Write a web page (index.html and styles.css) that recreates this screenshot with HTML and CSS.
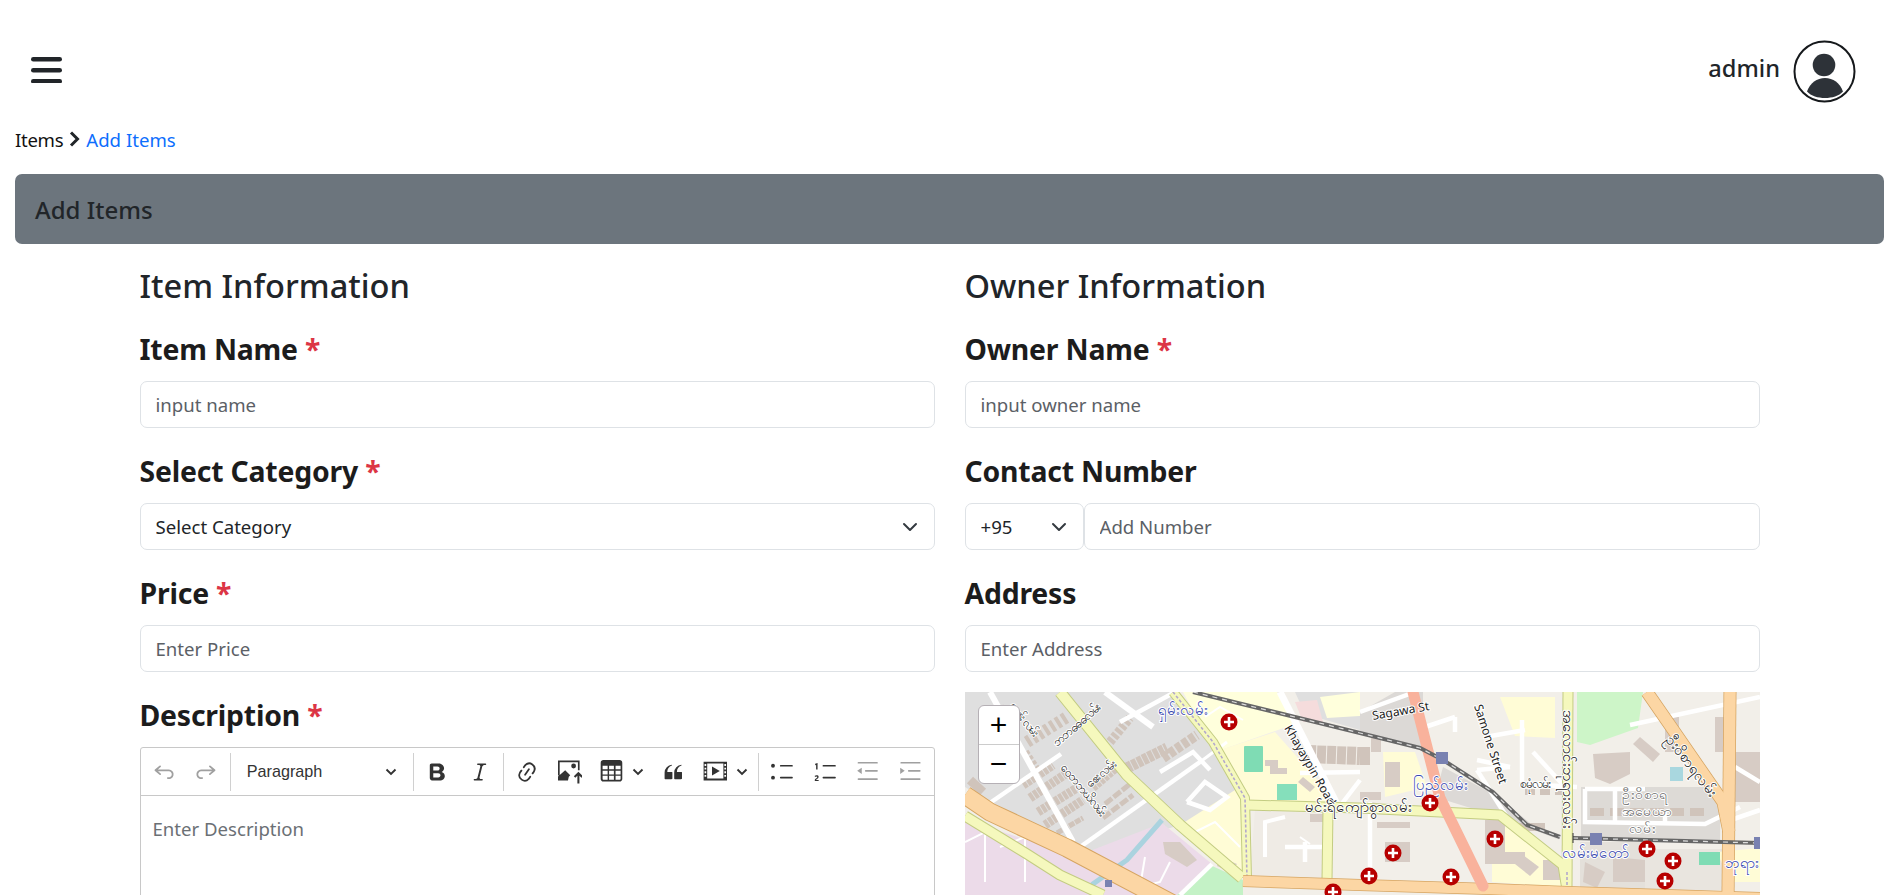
FILE: index.html
```html
<!DOCTYPE html>
<html>
<head>
  <meta charset="UTF-8" />
  <title>Add Items</title>
  <link rel="stylesheet" href="styles.css">
</head>
<body>
  <header class="topbar">
    <svg class="burger" width="31" height="26" viewBox="0 0 31 26"><rect y="0" width="31" height="4.6" rx="2.3"/><rect y="11" width="31" height="4.6" rx="2.3"/><rect y="22" width="31" height="4.6" rx="2.3"/></svg>
    <div class="user">
      <span class="user-name">admin</span>
      <svg class="avatar" width="63" height="63" viewBox="0 0 63 63">
        <circle cx="31.5" cy="31.5" r="30" fill="#fff" stroke="#16191c" stroke-width="2"/>
        <circle cx="31" cy="25" r="11.3" fill="#2d3238"/>
        <path d="M14 51.5C17 43 24 38 32 38S47 43 50 51.5C46 56 39 58 32 58S18 56 14 51.5Z" fill="#2d3238"/>
      </svg>
    </div>
  </header>

  <nav class="crumbs">
    <span class="crumb-first">Items</span>
    <svg class="crumb-sep" width="11" height="16" viewBox="0 0 11 16"><path d="M2 1.5 8.500 8 2 14.500" fill="none" stroke="#212529" stroke-width="3"/></svg>
    <a class="crumb-link">Add Items</a>
  </nav>

  <div class="banner">Add Items</div>

  <form class="form-row">
    <section class="col">
      <h3 class="col-title">Item Information</h3>
      <div class="group">
        <h4 class="label">Item Name <span class="star">*</span></h4>
        <input class="field" type="text" placeholder="input name" />
      </div>
      <div class="group">
        <h4 class="label">Select Category <span class="star">*</span></h4>
        <div class="select-wrap">
          <select class="field select"><option>Select Category</option></select>
          <svg class="chev" width="16" height="10" viewBox="0 0 16 10"><path d="M2 2l6 6 6-6" fill="none" stroke="#343a40" stroke-width="2" stroke-linecap="round" stroke-linejoin="round"/></svg>
        </div>
      </div>
      <div class="group">
        <h4 class="label">Price <span class="star">*</span></h4>
        <input class="field" type="text" placeholder="Enter Price" />
      </div>
      <div class="group">
        <h4 class="label">Description <span class="star">*</span></h4>
        <div class="editor">
          <div class="toolbar">
            <button type="button" class="tool off"><svg viewBox="0 0 20 20"><path d="m5.042 9.367 2.189 1.837a.75.75 0 0 1-.965 1.149l-3.788-3.18a.747.747 0 0 1-.21-.284.75.75 0 0 1 .17-.945L6.23 4.762a.75.75 0 1 1 .964 1.15L4.863 7.867h8.917A.75.75 0 0 1 14 7.9a4 4 0 1 1-1.477 7.718l.344-1.489a2.5 2.5 0 1 0 1.094-4.73l.008-.032H5.042z"/></svg></button>
            <button type="button" class="tool off"><svg viewBox="0 0 20 20"><path d="m14.958 9.367-2.189 1.837a.75.75 0 0 0 .965 1.149l3.788-3.18a.747.747 0 0 0 .21-.284.75.75 0 0 0-.17-.945L13.77 4.762a.75.75 0 1 0-.964 1.15l2.331 1.955H6.22A.75.75 0 0 0 6 7.9a4 4 0 1 0 1.477 7.718l-.344-1.489A2.5 2.5 0 1 1 6.039 9.4l-.008-.032h8.927z"/></svg></button>
            <span class="sep"></span>
            <button type="button" class="heading-pick"><span>Paragraph</span><svg class="tool-chev" width="12" height="8" viewBox="0 0 12 8"><path d="M1.500 1.500 6 6l4.500-4.500" fill="none" stroke="#333" stroke-width="1.900"/></svg></button>
            <span class="sep"></span>
            <button type="button" class="tool"><svg viewBox="0 0 20 20"><path fill-rule="evenodd" d="M5.600 3h5.200c1.200 0 2.200.1 2.900.5.7.3 1.200.8 1.600 1.400.4.6.6 1.300.6 2 0 1.300-.7 2.300-2 3 1.700.6 2.600 1.800 2.600 3.400 0 1.100-.4 2-1.100 2.700-.8.7-1.900 1.100-3.400 1.100H5.600C4.600 16.600 4 16 4 15V4.600C4 3.600 4.600 3 5.600 3zM6.900 5.400v3.400h3.400c1.200 0 1.900-.7 1.900-1.700s-.7-1.700-1.900-1.700H6.900zm0 5.700v3.400h4c1.300 0 2-.7 2-1.700s-.8-1.700-2-1.700h-4z"/></svg></button>
            <button type="button" class="tool"><svg viewBox="0 0 20 20"><path d="m9.586 14.633.021.004c-.036.335.095.655.393.962.082.083.173.15.274.201h1.474a.6.6 0 1 1 0 1.2H5.304a.6.6 0 0 1 0-1.2h1.15c.474-.07.809-.182 1.005-.334.157-.122.291-.32.404-.597l2.416-9.55a1.053 1.053 0 0 0-.281-.823 1.12 1.12 0 0 0-.442-.296H8.15a.6.6 0 0 1 0-1.2h6.443a.6.6 0 1 1 0 1.2h-1.195c-.376.056-.65.155-.823.296-.215.175-.423.439-.623.79l-2.366 9.347z"/></svg></button>
            <span class="sep"></span>
            <button type="button" class="tool"><svg viewBox="0 0 20 20"><path d="m11.077 15 .991-1.416a.75.75 0 1 1 1.229.86l-1.148 1.64a.748.748 0 0 1-.217.206 5.251 5.251 0 0 1-8.503-5.955.741.741 0 0 1 .12-.274l1.147-1.639a.75.75 0 1 1 1.228.86L4.933 10.7l.006.003a3.75 3.75 0 0 0 6.132 4.294l.006.004zm5.494-5.335a.748.748 0 0 1-.12.274l-1.147 1.639a.75.75 0 1 1-1.228-.86l.86-1.23a3.75 3.75 0 0 0-6.144-4.301l-.86 1.229a.75.75 0 0 1-1.229-.86l1.148-1.64a.748.748 0 0 1 .217-.206 5.251 5.251 0 0 1 8.503 5.955zm-4.563-2.532a.75.75 0 0 1 .184 1.045l-3.155 4.505a.75.75 0 1 1-1.229-.86l3.155-4.506a.75.75 0 0 1 1.045-.184z"/></svg></button>
            <button type="button" class="tool"><svg class="wide" viewBox="0 0 20 20"><path d="M0 .5h18v8h-1.400V1.900H1.400V13H0V.5zM13 3a2 2 0 1 1 0 4 2 2 0 0 1 0-4zM0 17v-3.200L6 8.500l4.200 4.200-1.200 1.300-.7 3H0z"/><path d="M17 19.500V11M13.800 14.200 17 11l3.200 3.200" fill="none" stroke="#333" stroke-width="1.700"/></svg></button>
            <button type="button" class="tool narrow"><svg viewBox="0 0 20 20"><path fill-rule="evenodd" d="M1.400 2.200C1.400 1 2.400 0 3.600 0h13.600c1.200 0 2.200 1 2.200 2.200v13.600c0 1.200-1 2.200-2.200 2.200H3.600c-1.200 0-2.200-1-2.200-2.200V2.200zM3 4.800v3h4.200v-3H3zm5.400 0v3h4v-3h-4zm5.400 0v3H18v-3h-4.200zM3 9v3h4.200V9H3zm5.400 0v3h4V9h-4zm5.400 0v3H18V9h-4.200zM3 13.200v2.600c0 .4.300.7.700.7h3.500v-3.300H3zm5.400 0v3.300h4v-3.300h-4zm5.400 0v3.300h3.500c.4 0 .7-.3.700-.7v-2.600h-4.200z"/></svg><svg class="tool-chev" width="12" height="8" viewBox="0 0 12 8"><path d="M1.500 1.500 6 6l4.500-4.500" fill="none" stroke="#333" stroke-width="1.900"/></svg></button>
            <button type="button" class="tool"><svg viewBox="0 0 20 20"><path d="M3 10.423a6.500 6.500 0 0 1 6.056-6.408l.038.67C6.448 5.423 5.354 7.663 5.220 10H9c.552 0 .5.432.5.986v4.511c0 .554-.448.503-1 .503h-5c-.552 0-.5-.449-.5-1.003v-4.574zm8 0a6.500 6.500 0 0 1 6.056-6.408l.038.67c-2.646.739-3.740 2.979-3.873 5.315H17c.552 0 .5.432.5.986v4.511c0 .554-.448.503-1 .503h-5c-.552 0-.5-.449-.5-1.003v-4.574z"/></svg></button>
            <button type="button" class="tool narrow"><svg viewBox="0 0 20 20"><path fill-rule="evenodd" d="M.5 1.400h19.500V17H.5V1.400zm3 1.600v12.400h13.500V3H3.500zM1.300 3.400v1.600h1.400V3.400H1.300zm0 3v1.600h1.400V6.400H1.300zm0 3v1.600h1.400V9.400H1.300zm0 3V14h1.400v-1.600H1.300zm16.500-9v1.600h1.400V3.400h-1.400zm0 3v1.600h1.400V6.400h-1.400zm0 3v1.600h1.400V9.400h-1.400zm0 3V14h1.400v-1.600h-1.400z"/><path d="M7.500 5.500l6.500 3.700-6.500 3.700V5.500z"/></svg><svg class="tool-chev" width="12" height="8" viewBox="0 0 12 8"><path d="M1.500 1.500 6 6l4.500-4.500" fill="none" stroke="#333" stroke-width="1.900"/></svg></button>
            <span class="sep"></span>
            <button type="button" class="tool"><svg viewBox="0 0 20 20"><circle cx="2.500" cy="4.800" r="1.600"/><circle cx="2.500" cy="14.700" r="1.600"/><rect x="8.300" y="4.100" width="10.700" height="1.400" rx=".6"/><rect x="8.300" y="14" width="10.700" height="1.400" rx=".6"/></svg></button>
            <button type="button" class="tool"><svg viewBox="0 0 20 20"><path d="M1.800 3.200 3.800 2.500V8H2.600V4.100L1.800 4.400z"/><path d="M1.500 17.500v-1c0-.9 2.100-1.400 2.100-2.300 0-.7-1.400-.6-2-.1l-.1-.9c.8-.6 3.200-.7 3.200.9 0 1.300-1.900 1.700-2.100 2.500h2.100v.9z"/><rect x="8" y="4.100" width="11" height="1.400" rx=".6"/><rect x="8" y="14" width="11" height="1.400" rx=".6"/></svg></button>
            <button type="button" class="tool off"><svg viewBox="0 0 20 20"><rect x="2.200" y="1.600" width="16.800" height="1.400" rx=".6"/><rect x="8.300" y="8.300" width="10.700" height="1.400" rx=".6"/><rect x="2.200" y="15.200" width="16.800" height="1.400" rx=".6"/><path d="M5.600 6.400v5.200L1.800 9z"/></svg></button>
            <button type="button" class="tool off"><svg viewBox="0 0 20 20"><rect x="2" y="1.600" width="16.800" height="1.400" rx=".6"/><rect x="8.300" y="8.300" width="10.500" height="1.400" rx=".6"/><rect x="2" y="15.200" width="16.800" height="1.400" rx=".6"/><path d="M1.800 6.400v5.200L5.600 9z"/></svg></button>
          </div>
          <div class="editor-body">Enter Description</div>
        </div>
      </div>
    </section>

    <section class="col">
      <h3 class="col-title">Owner Information</h3>
      <div class="group">
        <h4 class="label">Owner Name <span class="star">*</span></h4>
        <input class="field" type="text" placeholder="input owner name" />
      </div>
      <div class="group">
        <h4 class="label">Contact Number</h4>
        <div class="phone">
          <div class="select-wrap code">
            <select class="field select"><option>+95</option></select>
            <svg class="chev" width="16" height="10" viewBox="0 0 16 10"><path d="M2 2l6 6 6-6" fill="none" stroke="#343a40" stroke-width="2" stroke-linecap="round" stroke-linejoin="round"/></svg>
          </div>
          <input class="field" type="text" placeholder="Add Number" />
        </div>
      </div>
      <div class="group">
        <h4 class="label">Address</h4>
        <input class="field" type="text" placeholder="Enter Address" />
      </div>
      <div class="map">
        <svg class="map-art" width="795" height="203" viewBox="0 0 795 203">
          <rect width="795" height="203" fill="#f2efe9"/>
          <!-- land use -->
          <polygon points="0,0 100,0 165,88 215,133 112,164 0,95" fill="#dfdfdf"/>
          <polygon points="100,0 208,0 282,106 215,133 162,83" fill="#dfdfdf"/>
          <polygon points="0,128 112,164 197,131 247,172 212,203 0,203" fill="#ecdbe9"/>
          <polygon points="218,0 312,0 330,32 250,60" fill="#ffffdc"/>
          <polygon points="255,58 310,40 372,110 285,112" fill="#fffcd6"/>
          <polygon points="215,133 270,98 278,108 280,186" fill="#fffcd6"/>
          <polygon points="330,0 395,0 395,38 340,22" fill="#dfdfdf"/>
          <polygon points="330,10 352,8 358,30 338,30" fill="#f5dcdc"/>
          <polygon points="355,5 395,0 395,24 362,26" fill="#ffffdc"/>
          <polygon points="395,20 395,42 458,58 458,0 430,0" fill="#dcd9d6"/>
          <polygon points="290,118 362,122 362,186 285,186" fill="#efebe5"/>
          <polygon points="478,75 530,103 570,135 595,148 535,125 470,105" fill="#dcd9d6"/>
          <polygon points="612,0 678,0 673,36 625,53 612,50" fill="#cdf5c8"/>
          <polygon points="245,173 278,188 278,203 212,203" fill="#c4f2c6"/>
          <polygon points="535,5 590,5 590,46 550,44" fill="#fffcd6"/>
          <polygon points="418,60 450,60 462,95 420,105" fill="#fffcd6"/>
          <polygon points="527,125 598,175 598,195 527,190" fill="#fffcd6"/>
          <polygon points="660,157 760,157 760,198 660,198" fill="#e9e5df"/>
          <polygon points="615,150 680,150 680,198 615,198" fill="#e4e0da"/>
          <polygon points="616,95 756,95 755,148 616,145" fill="#dddad6"/>
          <polygon points="752,160 795,156 795,190 765,190" fill="#fffcd6"/>
          <rect x="279" y="54" width="19" height="26" rx="1" fill="#7fdcb4"/>
          <rect x="312" y="92" width="20" height="16" fill="#85dfbb"/>
          <rect x="734" y="160" width="21" height="13" fill="#7fdcb4"/>
          <rect x="705" y="75" width="13" height="14" fill="#a9d7df"/>
          <polyline class="water" points="127,203 128,192 162,168 197,128"/>
          <!-- buildings -->
          <g class="bld">
            <line x1="58" y1="93" x2="88" y2="73" stroke-width="9" stroke-dasharray="4 1"/>
            <line x1="65" y1="106" x2="102" y2="81" stroke-width="9" stroke-dasharray="4 1"/>
            <line x1="73" y1="120" x2="112" y2="96" stroke-width="9" stroke-dasharray="4 1"/>
            <line x1="80" y1="133" x2="118" y2="108" stroke-width="9" stroke-dasharray="4 1"/>
            <line x1="92" y1="141" x2="118" y2="126" stroke-width="5" stroke-dasharray="6 1"/>
            <line x1="128" y1="96" x2="155" y2="73" stroke-width="8" stroke-dasharray="4 1"/>
            <line x1="138" y1="126" x2="168" y2="103" stroke-width="5" stroke-dasharray="9 2"/>
            <line x1="140" y1="112" x2="165" y2="92" stroke-width="5" stroke-dasharray="9 2"/>
            <line x1="62" y1="50" x2="102" y2="25" stroke-width="12" stroke-dasharray="4 3"/>
            <line x1="145" y1="50" x2="165" y2="26" stroke-width="9" stroke-dasharray="4 2"/>
            <line x1="162" y1="76" x2="202" y2="56" stroke-width="11" stroke-dasharray="5 1"/>
            <line x1="198" y1="66" x2="232" y2="43" stroke-width="10" stroke-dasharray="6 2"/>
            <line x1="35" y1="15" x2="50" y2="35" stroke-width="8" stroke-dasharray="4 3"/>
            <line x1="60" y1="60" x2="72" y2="78" stroke-width="8" stroke-dasharray="4 2"/>
            <line x1="5" y1="88" x2="18" y2="100" stroke-width="9"/>
            <polygon points="198,150 215,150 232,168 222,175 200,162"/>
            <polygon points="255,165 272,172 265,180 252,174"/>
            <line x1="342" y1="62" x2="395" y2="64" stroke-width="18" stroke-dasharray="9 1"/>
            <line x1="395" y1="64" x2="405" y2="64" stroke-width="18"/>
            <polygon points="300,68 313,68 313,76 322,76 322,82 305,82 305,74 300,74"/>
            <polygon points="338,85 350,95 345,100 333,90"/>
            <polygon points="345,122 358,122 358,130 345,130"/>
            <polygon points="395,100 416,100 416,108 395,108"/>
            <polygon points="406,45 416,45 416,60 406,60"/>
            <polygon points="420,70 435,70 435,95 420,95"/>
            <polygon points="405,110 455,118 455,122 405,118"/>
            <polygon points="412,130 445,130 445,136 412,136"/>
            <polygon points="420,150 445,150 445,170 420,170"/>
            <polygon points="520,128 540,128 540,160 560,160 560,172 520,172"/>
            <polygon points="558,163 574,175 565,184 550,172"/>
            <polygon points="578,168 598,168 598,188 578,188"/>
            <polygon points="628,62 665,60 665,82 645,92 630,86"/>
            <polygon points="675,45 695,62 688,70 668,52"/>
            <polygon points="620,170 640,180 632,196 618,190"/>
            <polygon points="648,165 680,168 680,190 648,190"/>
            <polygon points="700,25 714,25 714,60 700,60"/>
            <polygon points="750,25 760,25 760,60 750,60"/>
            <polygon points="770,60 795,60 795,110 770,110"/>
            <line x1="625" y1="120" x2="740" y2="120" stroke-width="8" stroke-dasharray="14 6"/>
            <line x1="560" y1="100" x2="600" y2="100" stroke-width="6" stroke-dasharray="10 5"/>
            <line x1="550" y1="135" x2="580" y2="135" stroke-width="8"/>
          </g>
          <!-- minor roads -->
          <g class="minor">
            <line x1="22" y1="113" x2="96" y2="62"/>
            <line x1="108" y1="160" x2="235" y2="70"/>
            <line x1="235" y1="70" x2="262" y2="50" stroke-width="3"/>
            <line x1="25" y1="0" x2="108" y2="150" stroke-width="6"/>
            <line x1="140" y1="0" x2="188" y2="35" stroke-width="6"/>
            <line x1="155" y1="30" x2="210" y2="0"/>
            <polyline points="195,80 228,60 245,78"/>
            <polyline points="222,110 240,90 262,105 245,118 222,110"/>
            <line x1="315" y1="0" x2="372" y2="112" stroke-width="7"/>
            <line x1="372" y1="118" x2="395" y2="88"/>
            <line x1="335" y1="81" x2="395" y2="80"/>
            <line x1="395" y1="20" x2="450" y2="0"/>
            <line x1="460" y1="35" x2="490" y2="25"/>
            <line x1="490" y1="25" x2="490" y2="40"/>
            <line x1="520" y1="45" x2="560" y2="38"/>
            <line x1="512" y1="68" x2="545" y2="75"/>
            <line x1="545" y1="75" x2="512" y2="78"/>
            <line x1="512" y1="78" x2="545" y2="130"/>
            <line x1="557" y1="28" x2="557" y2="90"/>
            <polyline points="568,60 600,95"/>
            <line x1="560" y1="92" x2="612" y2="95"/>
            <line x1="620" y1="97" x2="680" y2="97"/>
            <polyline points="620,97 620,130 740,132 775,115"/>
            <line x1="650" y1="97" x2="650" y2="130"/>
            <line x1="700" y1="118" x2="700" y2="132"/>
            <line x1="665" y1="33" x2="795" y2="5"/>
            <line x1="405" y1="110" x2="405" y2="185"/>
            <line x1="770" y1="75" x2="795" y2="90"/>
            <line x1="760" y1="130" x2="795" y2="118"/>
            <polyline points="300,165 300,130 320,125" stroke-width="4"/>
            <line x1="320" y1="155" x2="362" y2="155"/>
            <line x1="340" y1="150" x2="340" y2="170"/>
            <line x1="215" y1="203" x2="247" y2="172"/>
          </g>
          <g class="path-thin">
            <polyline points="0,150 20,140 20,190"/>
            <polyline points="35,155 60,145 60,190"/>
            <polyline points="180,165 175,195 195,190 205,170"/>
            <polyline points="230,140 250,130 275,155"/>
            <polyline points="240,25 255,15 278,28"/>
            <polyline points="345,152 335,145"/>
          </g>
          <!-- secondary and tertiary -->
          <g class="road-edge">
            <polyline points="0,124 62,162 95,183 138,203" stroke-width="11"/>
            <polyline points="95,0 162,83 215,133 277,186" stroke-width="12"/>
            <polyline points="208,0 248,50 280,106 282,186" stroke-width="10"/>
            <polyline points="282,113 395,116 535,123 598,173 602,198" stroke-width="11"/>
            <line x1="363" y1="118" x2="362" y2="188" stroke-width="11"/>
            <line x1="603" y1="0" x2="602" y2="198" stroke-width="11"/>
          </g>
          <g class="road-fill">
            <polyline points="0,124 62,162 95,183 138,203" stroke-width="9"/>
            <polyline points="95,0 162,83 215,133 277,186" stroke-width="10"/>
            <polyline points="208,0 248,50 280,106 282,186" stroke-width="8"/>
            <polyline points="282,113 395,116 535,123 598,173 602,198" stroke-width="9"/>
            <line x1="363" y1="118" x2="362" y2="188" stroke-width="9"/>
            <line x1="603" y1="0" x2="602" y2="198" stroke-width="9"/>
          </g>
          <polyline class="metro" points="208,0 248,50 280,106 282,186"/>
          <line class="metro" x1="762" y1="150" x2="762" y2="203"/>
          <line class="metro" x1="602" y1="180" x2="602" y2="203"/>
          <!-- primary -->
          <g class="prim-edge">
            <polyline points="0,103 25,120 102,156 208,212" stroke-width="19"/>
            <polyline points="278,189 395,193 525,197 602,200 795,206" stroke-width="12"/>
            <polyline points="682,0 758,110 764,140" stroke-width="13"/>
            <line x1="765" y1="0" x2="763" y2="205" stroke-width="13"/>
          </g>
          <g class="prim-fill">
            <polyline points="0,103 25,120 102,156 208,212" stroke-width="17"/>
            <polyline points="278,189 395,193 525,197 602,200 795,206" stroke-width="10.500"/>
            <polyline points="682,0 758,110 764,140" stroke-width="11.500"/>
            <line x1="765" y1="0" x2="763" y2="205" stroke-width="11.500"/>
          </g>
          <polyline class="trunk" points="448,0 475,106 518,194"/>
          <!-- rail -->
          <polyline class="rail" points="228,0 395,41 455,56 478,68 528,100 562,133 595,145"/>
          <polyline class="rail-dash" points="228,0 395,41 455,56 478,68 528,100 562,133 595,145"/>
          <polyline class="rail" points="608,146 795,151"/>
          <polyline class="rail-dash" points="608,146 795,151"/>
          <line x1="608" y1="141" x2="608" y2="151" stroke="#333" stroke-width="1"/>
          <rect class="station" x="471" y="60" width="12" height="12"/>
          <rect class="station" x="625" y="141" width="12" height="12"/>
          <rect class="station" x="789" y="145" width="12" height="12"/>
          <rect class="station" x="140" y="188" width="7" height="7"/>
          <!-- labels -->
          <g class="map-road-text">
            <text transform="translate(319,36) rotate(60)">Khayaypin Road</text>
            <text transform="translate(509,14) rotate(72)">Samone Street</text>
            <text transform="translate(408,28) rotate(-10)">Sagawa St</text>
            <text x="340" y="120" class="big">မင်းရဲကျော်စွာလမ်း</text>
            <text x="555" y="96">စမုံလမ်း</text>
            <text transform="translate(598,18) rotate(90)" class="big">အလောင်းဘုရားလမ်း</text>
            <text transform="translate(700,48) rotate(52)" class="big">ဦးဝိစာရလမ်း</text>
            <text transform="translate(92,55) rotate(-41)">ဘဘဓဓဓလမ်း</text>
            <text transform="translate(125,96) rotate(-40)">ဧေးလမ်း</text>
            <text transform="translate(95,76) rotate(50)">ဝေဘဘဃိလမ်း</text>
            <text transform="translate(44,14) rotate(52)">ကျွန်းလမ်း</text>
            <text x="657" y="107" class="soft">ဦးဝိစာရ</text>
            <text x="657" y="124" class="soft">အမေယာ</text>
            <text x="664" y="141" class="soft">လမ်း</text>
          </g>
          <g class="map-place">
            <text x="193" y="23">ရှမ်းလမ်း</text>
            <text x="448" y="98">ပြည်လမ်း</text>
            <text x="597" y="166">လမ်းမတော်</text>
            <text x="760" y="176">ဘုရား</text>
          </g>
          <g class="hosp">
            <g transform="translate(264,30)"><circle r="8.500"/><path d="M-5 0H5M0-5V5"/></g>
            <g transform="translate(368,200)"><circle r="8.500"/><path d="M-5 0H5M0-5V5"/></g>
            <g transform="translate(465,111)"><circle r="8.500"/><path d="M-5 0H5M0-5V5"/></g>
            <g transform="translate(530,147)"><circle r="8.500"/><path d="M-5 0H5M0-5V5"/></g>
            <g transform="translate(428,161)"><circle r="8.500"/><path d="M-5 0H5M0-5V5"/></g>
            <g transform="translate(404,184)"><circle r="8.500"/><path d="M-5 0H5M0-5V5"/></g>
            <g transform="translate(486,185)"><circle r="8.500"/><path d="M-5 0H5M0-5V5"/></g>
            <g transform="translate(682,157)"><circle r="8.500"/><path d="M-5 0H5M0-5V5"/></g>
            <g transform="translate(708,169)"><circle r="8.500"/><path d="M-5 0H5M0-5V5"/></g>
            <g transform="translate(700,189)"><circle r="8.500"/><path d="M-5 0H5M0-5V5"/></g>
          </g>
        </svg>
        <div class="map-zoom">
          <a class="zoom-btn">+</a>
          <a class="zoom-btn">−</a>
        </div>
      </div>
    </section>
  </form>
</body>
</html>
```
FILE: styles.css
```css
html { overflow: hidden; height: 100%; }
body {
  margin: 0; padding: 0 7px 0 15px; color: #212529; background-color: #fff;
  font-family: "Noto Sans", "Open Sans", sans-serif; font-size: 18.6px;
}
.topbar {
  display: flex; align-items: center; justify-content: space-between;
  height: 103px; padding: 39px 28px 0 16px; box-sizing: border-box;
}
.burger { fill: #212529; margin-top: -2px; }
.user { display: flex; align-items: center; gap: 13px; }
.user-name { font-size: 23.6px; font-weight: 500; margin-bottom: 6px; }
.avatar { display: block; }
.crumbs {
  display: flex; align-items: center; gap: 6px; height: 26px; margin-top: 23px; margin-bottom: 22px; color: #111;
}
.crumb-first { letter-spacing: -.3px; }
.crumb-link { color: #0d6efd; }
.crumb-sep { display: block; }
.banner {
  height: 70px; line-height: 72px; padding-left: 20px;
  background-color: #6c757d; border-radius: 7px; font-size: 24px; font-weight: 500;
}
.form-row {
  display: grid; grid-template-columns: 795px 795px; gap: 30px;
  justify-content: center; margin-top: 22px;
}
.col-title { margin: 0 0 26px; font-size: 32.6px; font-weight: 500; line-height: 40px; }
.group { margin-bottom: 26px; }
.label {
  margin: 0 0 14px; font-size: 28.4px; font-weight: 700; line-height: 35px;
  letter-spacing: -.2px; color: #1c1c1c;
}
.star { color: #dc3545; }
.field {
  display: block; width: 100%; height: 47px; box-sizing: border-box;
  padding: 0 15px; border: 1px solid #dee2e6; border-radius: 7px;
  background-color: #fff; color: #212529; font: inherit; outline: none;
}
.field::placeholder { color: #5b6066; opacity: 1; }
.select { appearance: none; -webkit-appearance: none; }
.select-wrap { position: relative; }
.chev { position: absolute; right: 17px; top: 19px; }
.phone { display: flex; }
.phone .code { flex: 0 0 119px; }
.editor { border: 1px solid #c8c8c8; border-radius: 3px; }
.toolbar {
  display: flex; align-items: center; height: 47px; padding: 0 2px;
  border-bottom: 1px solid #c8c8c8;
}
.tool {
  display: flex; align-items: center; justify-content: center; flex: none;
  width: 42.6px; height: 36px; padding: 0; border: 0; background: none; fill: #333;
}
.tool svg:first-child { width: 24px; height: 24px; display: block; }
.tool.off { fill: #a0a0a0; }
.tool.narrow { width: 61px; justify-content: flex-start; gap: 9px; padding-left: 8px; box-sizing: border-box; }
.sep { width: 1px; height: 38px; margin: 0 2px; background-color: #d0d0d0; flex: none; }
.heading-pick {
  display: flex; align-items: center; justify-content: space-between; flex: none;
  width: 178px; height: 36px; padding: 0 14px; border: 0; background: none;
  font-family: "Liberation Sans", sans-serif; font-size: 16.2px; color: #333;
}
.editor-body { min-height: 300px; padding: 20px 12px; color: #6b7075; }
.map { position: relative; height: 420px; margin-top: -6px; overflow: hidden; background-color: #f2efe9; }
.map-art { display: block; }
.map-zoom {
  position: absolute; top: 13px; left: 13px; width: 40px;
  border-radius: 6px; border: 1px solid #b5b0b5; background-color: #fff;
  display: flex; flex-direction: column;
}
.zoom-btn {
  height: 38px; line-height: 37px; text-align: center; color: #000;
  font-family: "Liberation Sans", sans-serif; font-size: 30px;
}
.zoom-btn + .zoom-btn { border-top: 1px solid #ccc; }
.water { fill: none; stroke: #aad3df; stroke-width: 5; }
.bld { fill: #d7ccc5; stroke: #d0c4bb; }
.bld polygon { stroke: none; }
.minor { fill: none; stroke: #fff; stroke-width: 4.5; }
.path-thin { fill: none; stroke: #fff; stroke-width: 2; }
.road-edge { fill: none; stroke: #c3cc82; stroke-linejoin: round; }
.road-fill { fill: none; stroke: #f5f8bd; stroke-linejoin: round; }
.metro { fill: none; stroke: #b3a8cb; stroke-width: 1.6; stroke-dasharray: 3 2; }
.prim-edge { fill: none; stroke: #d6a562; stroke-linejoin: round; }
.prim-fill { fill: none; stroke: #fcd6a4; stroke-linejoin: round; }
.trunk { fill: none; stroke: #f9b29c; stroke-width: 11; stroke-linecap: round; stroke-linejoin: round; }
.rail { fill: none; stroke: #666; stroke-width: 4; }
.rail-dash { fill: none; stroke: #ddd; stroke-width: 1.2; stroke-dasharray: 5 5; }
.station { fill: #7981b1; }
.map-road-text text {
  font-family: "Noto Sans", sans-serif; font-size: 12px; fill: #222;
  paint-order: stroke; stroke: #fff; stroke-width: 2px;
}
.map-road-text text.big { font-size: 15px; }
.map-road-text text.soft { font-size: 14px; fill: #666; }
.map-place text {
  font-family: "Noto Sans", sans-serif; font-size: 15px; fill: #3a4ab0;
  paint-order: stroke; stroke: #fff; stroke-width: 2px;
}
.hosp circle { fill: #b70000; }
.hosp path { stroke: #fff; stroke-width: 2.6; fill: none; }
```
